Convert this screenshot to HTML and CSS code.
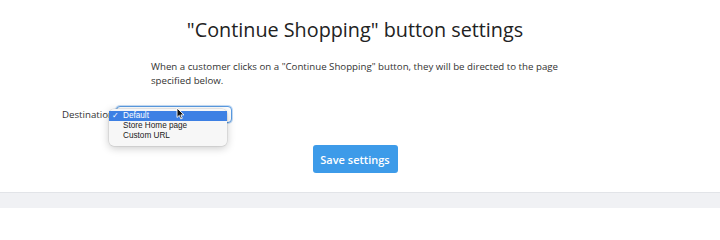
FILE: index.html
```html
<!DOCTYPE html>
<html>
<head>
<meta charset="utf-8">
<link rel="stylesheet" href="styles.css">
</head>
<body>
<div class="page">
  <h1 class="title">"Continue Shopping" button settings</h1>
  <p class="desc">When a customer clicks on a "Continue Shopping" button, they will be directed to the page specified below.</p>
  <div class="row">
    <label class="label">Destination</label>
    <div class="select-wrap">
      <div class="select"></div>
      <ul class="menu">
        <li class="item active"><span class="check">✓</span>Default</li>
        <li class="item">Store Home page</li>
        <li class="item">Custom URL</li>
      </ul>
      <svg class="cursor" width="9" height="13" viewBox="0 0 9 13"><path d="M1 1 L1 10.5 L3.3 8.4 L4.8 11.9 L6.3 11.3 L4.9 7.9 L8 7.9 Z" fill="#111" stroke="#fff" stroke-width="0.9" stroke-linejoin="round"/></svg>
    </div>
  </div>
  <div class="actions">
    <button class="btn">Save settings</button>
  </div>
</div>
<div class="footer"></div>
</body>
</html>
```
FILE: styles.css
```css
html, body { margin: 0; padding: 0; background: #fff; }
body { font-family: "Open Sans", "Liberation Sans", sans-serif; color: #333; width: 720px; height: 208px; overflow: hidden; }
.page { width: 710px; height: 192px; padding-top: 16px; box-sizing: border-box; }
.title { margin: 0; font-size: 19.8px; line-height: 28px; font-weight: 400; text-align: center; color: #222; }
.desc { width: 430px; margin: 16px 0 0 151px; font-size: 9.7px; line-height: 14px; color: #333; }
.row { display: flex; align-items: center; margin-top: 18px; padding-left: 62px; }
.label { font-size: 9.7px; line-height: 17px; color: #333; width: 54px; white-space: nowrap; }
.select-wrap { position: relative; }
.select { width: 116px; height: 17px; box-sizing: border-box; border: 1px solid #5a9be2; border-radius: 4px; box-shadow: 0 0 0 1px rgba(90,155,226,0.35); background: #fff; }
.menu { position: absolute; left: -7px; top: 3px; width: 118px; margin: 0; padding: 2px 0 5px; list-style: none; background: #f7f7f7; border-radius: 5px; box-shadow: 0 2px 8px rgba(0,0,0,0.22), 0 0 0 0.5px rgba(0,0,0,0.12); font-family: "Liberation Sans", Roboto, sans-serif; font-size: 8.2px; color: #222; }
.item { height: 10px; line-height: 10px; padding-left: 14px; position: relative; }
.item.active { background: #3d80e4; color: #fff; }
.check { position: absolute; left: 3px; top: 0; font-size: 8px; }
.cursor { position: absolute; left: 60px; top: 1px; }
.actions { display: flex; justify-content: center; margin-top: 22px; }
.btn { width: 85px; height: 28px; border: 0; border-radius: 3px; background: #3d9be9; color: #fff; font-family: "Open Sans", sans-serif; font-size: 11px; font-weight: 600; padding: 0; }
.footer { height: 16px; background: #f0f1f4; border-top: 1px solid #e2e4e8; }
```
